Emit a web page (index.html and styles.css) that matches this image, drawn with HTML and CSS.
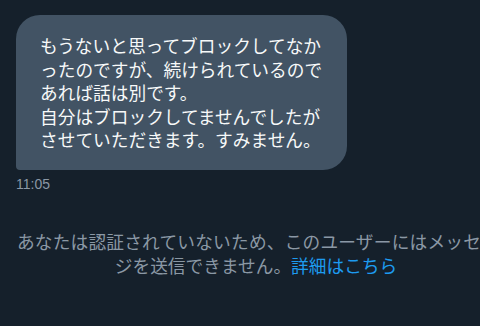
FILE: index.html
```html
<!DOCTYPE html>
<html lang="ja">
<head>
<meta charset="utf-8">
<link rel="stylesheet" href="styles.css">
</head>
<body>
<div class="page">
  <div class="message">
    <div class="bubble">もうないと思ってブロックしてなかったのですが、続けられているのであれば話は別です。<br>自分はブロックしてませんでしたがさせていただきます。すみません。</div>
    <div class="time">11:05</div>
  </div>
  <div class="notice"><span class="line-wide">あなたは認証されていないため、このユーザーにはメッセ</span><br><span class="line">ジを送信できません。<a class="link" href="#">詳細はこちら</a></span></div>
</div>
</body>
</html>
```
FILE: styles.css
```css
html, body {
  margin: 0;
  padding: 0;
  background: #15202b;
  overflow: hidden;
}
body {
  width: 480px;
  height: 326px;
  font-family: "Noto Sans CJK JP", "Noto Sans", sans-serif;
}
.page {
  width: 512px;
  padding-top: 15px;
}
.message {
  padding-left: 16px;
  display: flex;
  flex-direction: column;
  align-items: flex-start;
}
.bubble {
  width: 283px;
  background: #425364;
  color: #f7f9f9;
  font-size: 17.7px;
  line-height: 23.6px;
  padding: 19px 24px 18px 24px;
  border-radius: 24px 24px 24px 4px;
}
.time {
  margin-top: 6px;
  color: #8b98a5;
  font-family: "Liberation Sans", "Noto Sans", sans-serif;
  font-size: 14px;
  line-height: 16px;
}
.notice {
  margin-top: 37px;
  text-align: center;
  color: #8b98a5;
  font-size: 17.7px;
  line-height: 24px;
  white-space: nowrap;
}
.line-wide {
  display: inline-block;
  letter-spacing: 0.2px;
  margin-right: 14px;
}
.link {
  color: #1d9bf0;
  text-decoration: none;
}
```
